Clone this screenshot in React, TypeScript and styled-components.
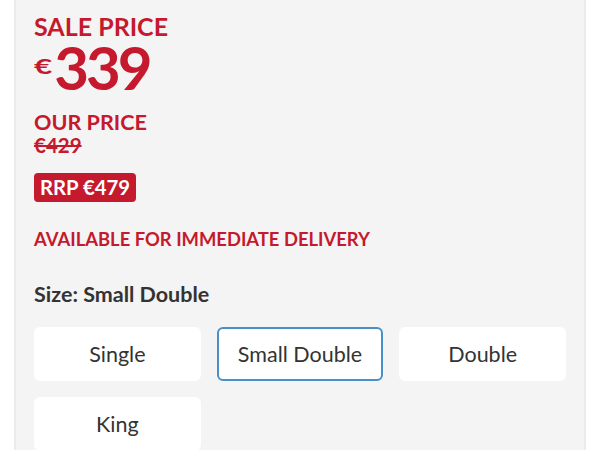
import React, { useState } from "react";
import styled, { createGlobalStyle } from "styled-components";

const Global = createGlobalStyle`
  html, body { margin: 0; padding: 0; background: #ffffff; }
  body { font-family: Lato, "Open Sans", Arial, sans-serif; -webkit-font-smoothing: antialiased; }
`;

const Page = styled.div`
  width: 600px;
  height: 450px;
  overflow: hidden;
  padding: 0 14px;
  box-sizing: border-box;
`;

const Panel = styled.section`
  background: #f4f4f4;
  border: 2px solid #ebebeb;
  border-top: none;
  padding: 13px 18px 24px 18px;
  box-sizing: border-box;
  min-height: 470px;
`;

const Red = "#c5192d";

const Label = styled.div<{ $size: number; $gap?: number }>`
  color: ${Red};
  font-weight: 700;
  font-size: ${(p) => p.$size}px;
  line-height: 1.1;
  margin-top: ${(p) => p.$gap ?? 0}px;
`;

const BigPrice = styled.div`
  color: ${Red};
  font-weight: 700;
  font-size: 60px;
  line-height: 52px;
  display: flex;
  align-items: flex-start;
  letter-spacing: -3px;
`;

const Currency = styled.span`
  display: inline-block;
  font-size: 21px;
  line-height: 21px;
  margin-top: 14px;
  margin-right: 8px;
  letter-spacing: 0;
  transform: scaleX(1.5);
  transform-origin: left center;
`;

const Struck = styled.div`
  color: ${Red};
  font-weight: 700;
  font-size: 20.5px;
  line-height: 22px;
  text-decoration: line-through;
  text-decoration-thickness: 2px;
`;

const Badge = styled.span`
  display: inline-block;
  background: ${Red};
  color: #fff;
  font-weight: 700;
  font-size: 20.3px;
  line-height: 29px;
  padding: 0 6px;
  border-radius: 4px;
  margin-top: 17px;
`;

const Notice = styled.div`
  color: ${Red};
  font-weight: 700;
  font-size: 18.4px;
  margin-top: 26px;
  line-height: 22px;
`;

const SizeLabel = styled.div`
  color: #333;
  font-weight: 700;
  font-size: 21.5px;
  margin-top: 32px;
  line-height: 24px;
`;

const Grid = styled.div`
  display: grid;
  grid-template-columns: repeat(3, 1fr);
  gap: 16px;
  margin-top: 21px;
`;

const Option = styled.button<{ $active?: boolean }>`
  height: 54px;
  background: #fff;
  border: 2px solid ${(p) => (p.$active ? "#4a8fc5" : "#fff")};
  border-radius: 6px;
  font-family: Lato, Arial, sans-serif;
  font-size: 21.5px;
  color: #333;
  cursor: pointer;
  padding: 0;
`;

const sizes = ["Single", "Small Double", "Double", "King"];

export default function App() {
  const [sel, setSel] = useState("Small Double");
  return (
    <Page>
      <Global />
      <Panel>
        <Label $size={25}>SALE PRICE</Label>
        <BigPrice>
          <Currency>€</Currency>339
        </BigPrice>
        <Label $size={21.6} $gap={18}>OUR PRICE</Label>
        <Struck>€429</Struck>
        <Badge>RRP €479</Badge>
        <Notice>AVAILABLE FOR IMMEDIATE DELIVERY</Notice>
        <SizeLabel>Size: {sel}</SizeLabel>
        <Grid>
          {sizes.map((s) => (
            <Option key={s} $active={s === sel} onClick={() => setSel(s)}>
              {s}
            </Option>
          ))}
        </Grid>
      </Panel>
    </Page>
  );
}
